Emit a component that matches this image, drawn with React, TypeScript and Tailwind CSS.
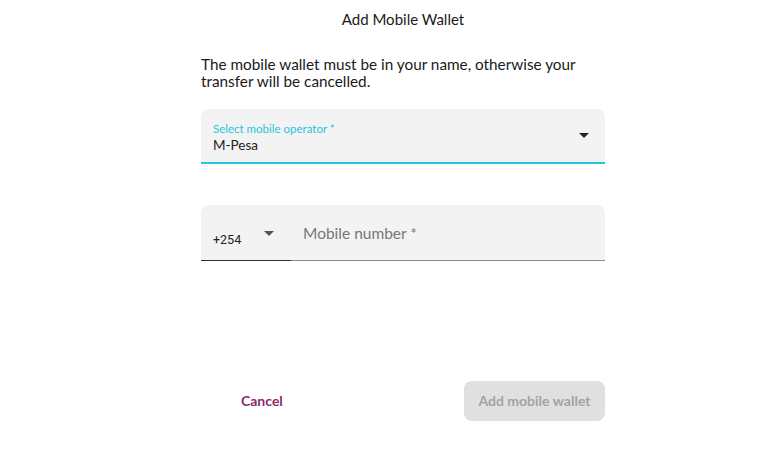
function Caret({ className }: { className?: string }) {
  return (
    <svg className={className} width="10" height="5" viewBox="0 0 10 5">
      <path d="M0 0h10L5 5z" fill="currentColor" />
    </svg>
  );
}

export default function App() {
  return (
    <div className="w-[759px] h-[460px] bg-white font-['Lato',sans-serif] text-[#1a1a1a]">
      <div className="ml-[201px] w-[404px] pt-[9px]">
        <div className="text-center text-[15px] leading-5">Add Mobile Wallet</div>

        <p className="mt-[27px] text-[15.3px] leading-[17px]">
          The mobile wallet must be in your name, otherwise your transfer will be cancelled.
        </p>

        <div className="mt-[19px] h-[55px] rounded-t-lg bg-[#f3f3f3] border-b-2 border-[#26c6da] flex items-center pl-3 pr-4">
          <div className="flex-1 pt-1">
            <div className="text-[11.5px] leading-[14px] text-[#26c6da]">Select mobile operator *</div>
            <div className="text-[13.5px] leading-[18px] text-[#222]">M-Pesa</div>
          </div>
          <Caret className="text-[#222]" />
        </div>

        <div className="mt-[41px] h-[56px] rounded-t-lg bg-[#f3f3f3] flex">
          <div className="w-[90px] border-b border-[#333] flex items-end pl-3 pb-[12px] relative">
            <span className="text-[12.5px] leading-4 font-['Roboto',sans-serif] text-[#222]">+254</span>
            <Caret className="absolute left-[63px] top-[26px] text-[#555]" />
          </div>
          <div className="flex-1 border-b border-[#8a8a8a] flex items-center pl-3 pt-[3px]">
            <span className="text-[15.5px] text-[#777]">Mobile number *</span>
          </div>
        </div>

        <div className="mt-[120px] flex items-center justify-between">
          <button className="ml-[40px] pb-[2px] text-[14px] font-bold text-[#8b2a6b]">Cancel</button>
          <button className="h-10 w-[141px] rounded-lg bg-[#e0e0e0] pb-[2px] text-[14px] font-bold text-[#a3a3a3]">
            Add mobile wallet
          </button>
        </div>
      </div>
    </div>
  );
}
